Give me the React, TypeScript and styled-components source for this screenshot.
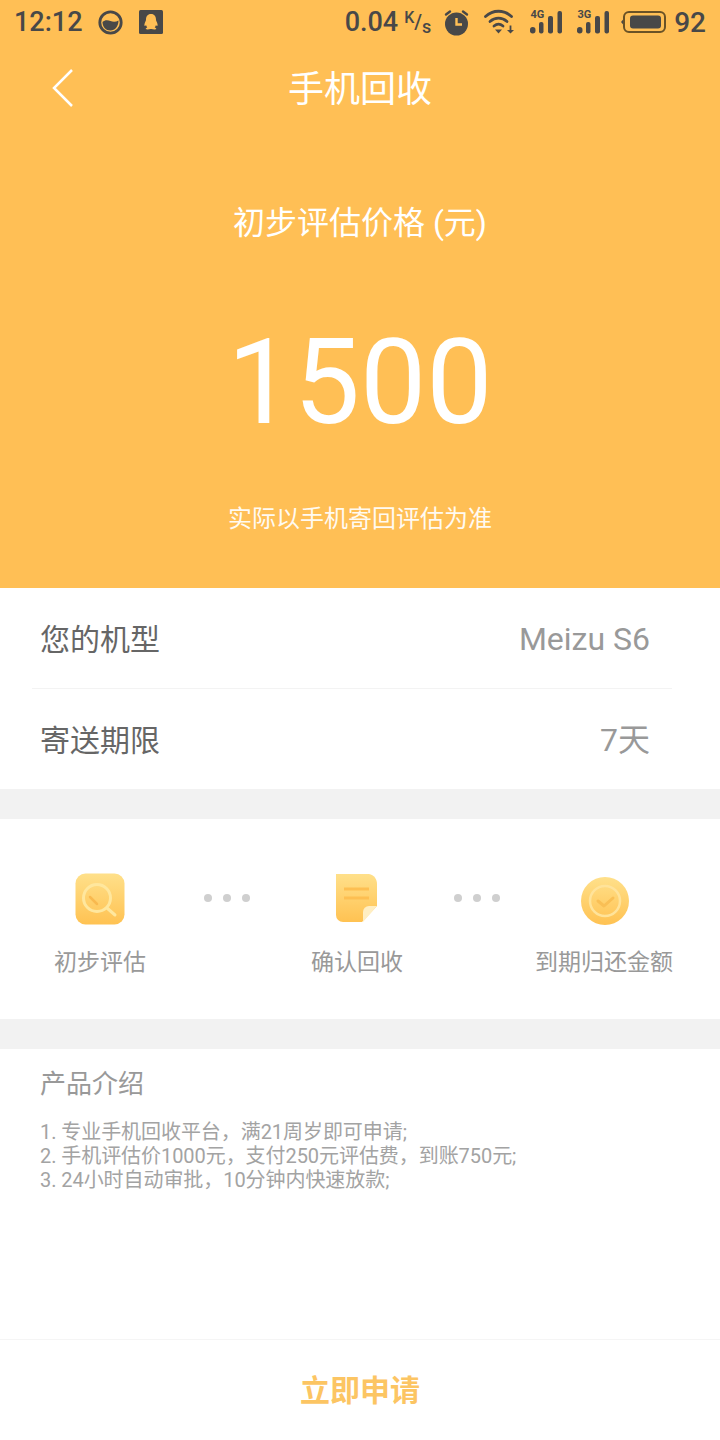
import React from "react";
import styled, { createGlobalStyle } from "styled-components";

const FONT = `Roboto, "Noto Sans CJK SC", "Noto Sans", sans-serif`;

const Global = createGlobalStyle`
  html, body { margin: 0; padding: 0; background: #fff; }
  * { box-sizing: border-box; }
  body { font-family: ${FONT}; }
`;

const Page = styled.div`
  width: 720px;
  height: 1440px;
  display: flex;
  flex-direction: column;
  background: #fff;
  overflow: hidden;
`;

const Hero = styled.header`
  height: 588px;
  background: #ffbf55;
  color: #fff;
  display: flex;
  flex-direction: column;
  align-items: center;
`;

const StatusBar = styled.div`
  width: 100%;
  height: 44px;
  padding: 0 14px;
  display: flex;
  align-items: center;
  color: #484848;
  font-weight: 500;
`;

const StatusTime = styled.span`
  font-size: 27px;
`;

const StatusLeft = styled.div`
  display: flex;
  align-items: center;
`;

const StatusRight = styled.div`
  margin-left: auto;
  display: flex;
  align-items: center;
`;

const StatusSlot = styled.span<{ $gap: number }>`
  display: flex;
  margin-left: ${(p) => p.$gap}px;
`;

const Speed = styled.span`
  font-size: 27px;
`;

const SpeedUnit = styled.span`
  width: 26px;
  height: 24px;
  margin: 0 13px 0 6px;
  display: flex;
  justify-content: space-between;
  line-height: 16px;
`;

const UnitPart = styled.span<{ $y: number; $size: number }>`
  font-size: ${(p) => p.$size}px;
  font-weight: 500;
  transform: translateY(${(p) => p.$y}px);
`;

const Battery = styled.span`
  font-size: 28px;
  margin-left: 8px;
`;

const NavBar = styled.nav`
  width: 100%;
  height: 88px;
  padding-bottom: 4px;
  display: flex;
  align-items: center;
  justify-content: center;
  position: relative;
`;

const BackIcon = styled.svg`
  position: absolute;
  left: 50px;
  top: 24px;
`;

const NavTitle = styled.h1`
  margin: 0;
  font-size: 36px;
  font-weight: 400;
`;

const PriceLabel = styled.div`
  margin-top: 67px;
  font-size: 32px;
  line-height: 48px;
`;

const Price = styled.div`
  margin-top: 66px;
  font-size: 118px;
  font-weight: 400;
  line-height: 140px;
`;

const PriceNote = styled.div`
  margin-top: 48px;
  font-size: 24px;
  line-height: 36px;
  opacity: 0.92;
`;

const InfoList = styled.section`
  padding: 0 48px 0 32px;
  height: 201px;
`;

const InfoRow = styled.div<{ $divided?: boolean }>`
  height: ${(p) => (p.$divided ? 101 : 100)}px;
  padding: 0 22px 3px 8px;
  display: flex;
  align-items: center;
  justify-content: space-between;
  border-bottom: ${(p) => (p.$divided ? "1px solid #f3f3f3" : "none")};
`;

const InfoLabel = styled.span`
  font-size: 30px;
  color: #666;
`;

const InfoValue = styled.span<{ $nudge: number }>`
  font-size: 32px;
  color: #999;
  transform: translateY(${(p) => p.$nudge}px);
`;

const Band = styled.div`
  height: 30px;
  background: #f2f2f2;
`;

const Steps = styled.section`
  height: 200px;
  padding-left: 54px;
  display: grid;
  grid-template-columns: 92px 58px 46px 61px 92px 51px 46px 35px 138px;
  align-items: start;
`;

const Step = styled.div<{ $col: number }>`
  grid-column: ${(p) => p.$col};
  display: flex;
  flex-direction: column;
  align-items: center;
  padding-top: 54px;
`;

const StepIcon = styled.svg`
  display: block;
`;

const StepLabel = styled.div`
  margin-top: 20px;
  font-size: 23px;
  line-height: 36px;
  color: #999;
  white-space: nowrap;
`;

const Dots = styled.div<{ $col: number }>`
  grid-column: ${(p) => p.$col};
  display: flex;
  gap: 11px;
  margin-top: 75px;
`;

const Dot = styled.i`
  display: block;
  width: 8px;
  height: 8px;
  border-radius: 50%;
  background: #cfcfcf;
`;

const Intro = styled.section`
  flex: 1;
  padding: 16px 40px 0;
`;

const IntroTitle = styled.h2`
  margin: 0;
  font-size: 26px;
  font-weight: 400;
  line-height: 38px;
  color: #999;
`;

const IntroList = styled.div`
  margin-top: 17px;
  font-size: 20px;
  line-height: 24px;
  letter-spacing: -0.06px;
  color: #a3a3a3;
`;

const Footer = styled.footer`
  height: 101px;
  padding-bottom: 4px;
  border-top: 1px solid #f5f5f5;
  display: flex;
  align-items: center;
  justify-content: center;
`;

const ApplyButton = styled.button`
  border: 0;
  background: none;
  padding: 0;
  font-family: ${FONT};
  font-size: 30px;
  font-weight: 700;
  color: #fcc563;
`;

const SmileIcon = () => (
  <svg width="25" height="25" viewBox="0 0 25 25">
    <circle cx="12.500" cy="12.500" r="10.700" fill="none" stroke="#484848" strokeWidth="2.800" />
    <path d="M4.500 12c2.500-2.500 5.500-2 8-1s5.500 1 8-.5c0 6-3.500 10-8 10S4.500 17 4.500 12z" fill="#484848" />
  </svg>
);

const QQIcon = () => (
  <svg width="24" height="24" viewBox="0 0 24 24">
    <rect width="24" height="24" rx="1.500" fill="#484848" />
    <path d="M12 4c-3.500 0-5 2.500-5 5.500 0 1-.3 1.500-1 3-.7 1.600-.8 3.300-.2 3.500.4.100.9-.5 1.200-1 .2 1 .7 1.800 1.300 2.400-1 .4-1.800.9-1.500 1.600.3.600 3 .6 4.700 0 .3 0 .7 0 1 0 1.700.6 4.400.6 4.700 0 .3-.7-.5-1.200-1.500-1.600.6-.6 1.100-1.400 1.300-2.400.3.500.8 1.100 1.200 1 .6-.2.500-1.900-.2-3.500-.7-1.500-1-2-1-3C17 6.500 15.500 4 12 4z" fill="#ffbf55" />
  </svg>
);

const AlarmIcon = () => (
  <svg width="27" height="27" viewBox="0 0 27 27">
    <circle cx="13.500" cy="15" r="11.500" fill="#484848" />
    <path d="M13.500 9v6.500h5.500" fill="none" stroke="#ffbf55" strokeWidth="2.400" />
    <path d="M3 5.500 7 2.500M24 5.500 20 2.500" stroke="#484848" strokeWidth="2.400" strokeLinecap="round" />
  </svg>
);

const WifiIcon = () => (
  <svg width="32" height="28" viewBox="0 0 32 28">
    <g fill="none" stroke="#484848" strokeWidth="2.800" strokeLinecap="round">
      <path d="M1.500 8.500C9 1.500 20 1.500 27.500 8.500" />
      <path d="M6 13.500c5-4.500 12-4.500 17 0" />
      <path d="M10 18c3-2.500 6-2.500 9 0" />
    </g>
    <path d="M11 21.500h7l-3.500 4z" fill="#484848" />
    <path d="M26.500 17.500v5" stroke="#484848" strokeWidth="1.800" />
    <path d="M23 22h7l-3.500 3.500z" fill="#484848" />
  </svg>
);

const SignalIcon = ({ label }: { label: string }) => (
  <svg width="32" height="26" viewBox="0 0 32 26">
    <text x="0.500" y="9" fontFamily="Roboto, sans-serif" fontSize="11" fontWeight="700" fill="#484848">{label}</text>
    <rect x="0" y="18" width="5.500" height="6.500" rx="2.700" fill="#484848" />
    <rect x="9" y="13" width="4.500" height="11.500" rx="2" fill="#484848" />
    <rect x="18" y="7" width="5" height="17.500" rx="2" fill="#484848" />
    <rect x="27.500" y="2" width="4.500" height="22.500" rx="2" fill="#484848" />
  </svg>
);

const BatteryIcon = () => (
  <svg width="45" height="24" viewBox="0 0 45 24">
    <path d="M3 8.500 0 12l3 3.500z" fill="#484848" />
    <rect x="3" y="2" width="41" height="20" rx="5" fill="none" stroke="#6a5226" strokeWidth="2" />
    <rect x="9" y="5.500" width="31" height="13" rx="3" fill="#484848" />
  </svg>
);

const gradient = (id: string) => (
  <defs>
    <linearGradient id={id} x1="0" y1="0" x2="0" y2="1">
      <stop offset="0" stopColor="#ffe08a" />
      <stop offset="1" stopColor="#ffc252" />
    </linearGradient>
  </defs>
);

const SearchCard = () => (
  <StepIcon width="50" height="52" viewBox="0 0 50 52">
    {gradient("g1")}
    <rect x="0.500" y="0.500" width="49" height="51" rx="10" fill="url(#g1)" />
    <circle cx="22" cy="25" r="13.500" fill="none" stroke="#ffe79e" strokeWidth="3" />
    <path d="M32 35l8 7" stroke="#ffe79e" strokeWidth="3" strokeLinecap="round" />
    <path d="M15 24l7 7" stroke="#f9b94f" strokeWidth="2.500" strokeLinecap="round" />
  </StepIcon>
);

const NoteCard = () => (
  <StepIcon width="50" height="52" viewBox="0 0 50 52">
    {gradient("g2")}
    <path d="M4 1h33c5 1 8 5 8 10v22L30 49H11a7 7 0 0 1-7-7z" fill="url(#g2)" />
    <path d="M45 33 31 49V39a6 6 0 0 1 6-6z" fill="#ffeec2" />
    <path d="M12 16h25M12 25h25" stroke="#fdbf52" strokeWidth="3" />
  </StepIcon>
);

const CheckBadge = () => (
  <StepIcon width="50" height="52" viewBox="0 0 50 52">
    {gradient("g3")}
    <circle cx="26" cy="28" r="24" fill="url(#g3)" />
    <circle cx="26" cy="28" r="15" fill="none" stroke="#ffe39a" strokeWidth="2.500" />
    <path d="M19 28l6 5 9-8" fill="none" stroke="#f9bf55" strokeWidth="3" strokeLinecap="round" strokeLinejoin="round" />
  </StepIcon>
);

const DotRow = ({ col }: { col: number }) => (
  <Dots $col={col}>
    <Dot />
    <Dot />
    <Dot />
  </Dots>
);

export default function App() {
  return (
    <Page>
      <Global />
      <Hero>
        <StatusBar>
          <StatusLeft>
            <StatusTime>12:12</StatusTime>
            <StatusSlot $gap={15}><SmileIcon /></StatusSlot>
            <StatusSlot $gap={16}><QQIcon /></StatusSlot>
          </StatusLeft>
          <StatusRight>
            <Speed>0.04</Speed>
            <SpeedUnit>
              <UnitPart $y={0} $size={16}>K</UnitPart>
              <UnitPart $y={4} $size={20}>/</UnitPart>
              <UnitPart $y={9} $size={18}>s</UnitPart>
            </SpeedUnit>
            <AlarmIcon />
            <StatusSlot $gap={14}><WifiIcon /></StatusSlot>
            <StatusSlot $gap={14}><SignalIcon label="4G" /></StatusSlot>
            <StatusSlot $gap={15}><SignalIcon label="3G" /></StatusSlot>
            <StatusSlot $gap={12}><BatteryIcon /></StatusSlot>
            <Battery>92</Battery>
          </StatusRight>
        </StatusBar>
        <NavBar>
          <BackIcon width="26" height="40" viewBox="0 0 26 40">
            <path d="M22 2 4 20l18 18" fill="none" stroke="#fff" strokeWidth="2.500" />
          </BackIcon>
          <NavTitle>手机回收</NavTitle>
        </NavBar>
        <PriceLabel>初步评估价格 (元)</PriceLabel>
        <Price>1500</Price>
        <PriceNote>实际以手机寄回评估为准</PriceNote>
      </Hero>
      <InfoList>
        <InfoRow $divided>
          <InfoLabel>您的机型</InfoLabel>
          <InfoValue $nudge={2}>Meizu S6</InfoValue>
        </InfoRow>
        <InfoRow>
          <InfoLabel>寄送期限</InfoLabel>
          <InfoValue $nudge={-1}>7天</InfoValue>
        </InfoRow>
      </InfoList>
      <Band />
      <Steps>
        <Step $col={1}>
          <SearchCard />
          <StepLabel>初步评估</StepLabel>
        </Step>
        <DotRow col={3} />
        <Step $col={5}>
          <NoteCard />
          <StepLabel>确认回收</StepLabel>
        </Step>
        <DotRow col={7} />
        <Step $col={9}>
          <CheckBadge />
          <StepLabel>到期归还金额</StepLabel>
        </Step>
      </Steps>
      <Band />
      <Intro>
        <IntroTitle>产品介绍</IntroTitle>
        <IntroList>
          <div>1. 专业手机回收平台，满21周岁即可申请;</div>
          <div>2. 手机评估价1000元，支付250元评估费，到账750元;</div>
          <div>3. 24小时自动审批，10分钟内快速放款;</div>
        </IntroList>
      </Intro>
      <Footer>
        <ApplyButton>立即申请</ApplyButton>
      </Footer>
    </Page>
  );
}
